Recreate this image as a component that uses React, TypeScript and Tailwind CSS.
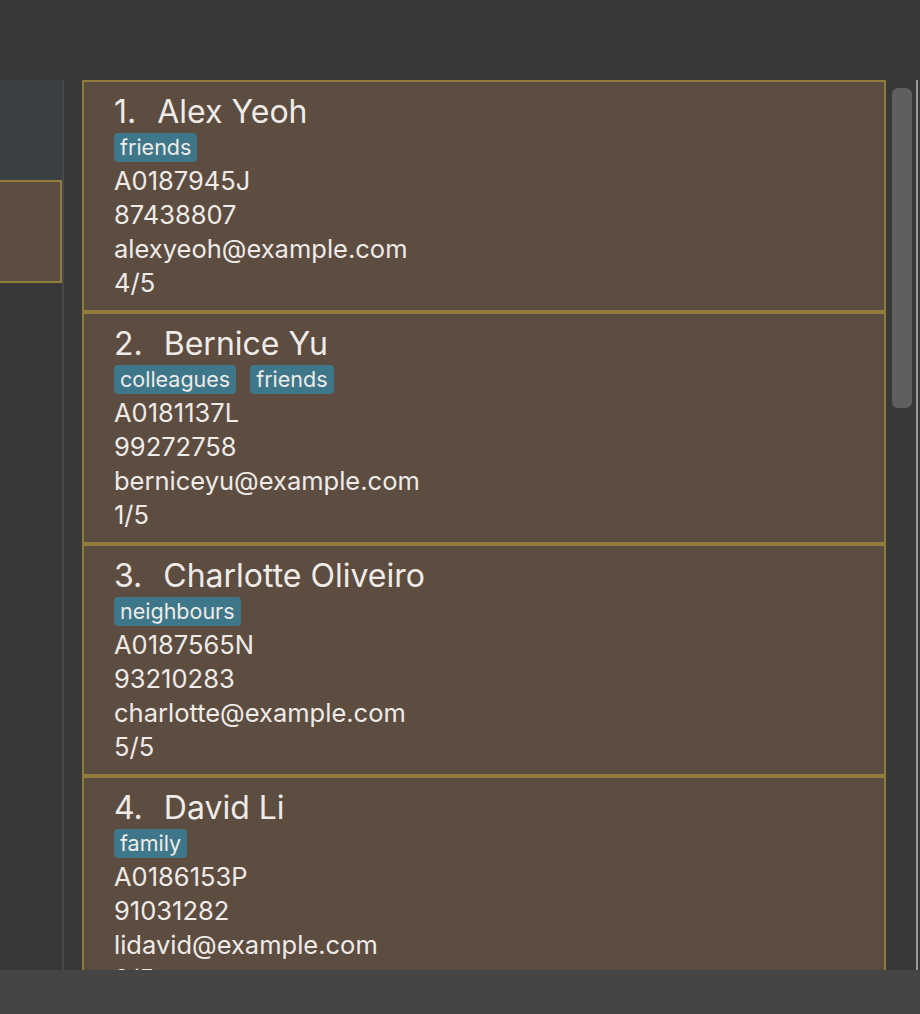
import React from "react";

type Person = { name: string; tags: string[]; id: string; phone: string; email: string; score: string };

const people: Person[] = [
  { name: "Alex Yeoh", tags: ["friends"], id: "A0187945J", phone: "87438807", email: "alexyeoh@example.com", score: "4/5" },
  { name: "Bernice Yu", tags: ["colleagues", "friends"], id: "A0181137L", phone: "99272758", email: "berniceyu@example.com", score: "1/5" },
  { name: "Charlotte Oliveiro", tags: ["neighbours"], id: "A0187565N", phone: "93210283", email: "charlotte@example.com", score: "5/5" },
  { name: "David Li", tags: ["family"], id: "A0186153P", phone: "91031282", email: "lidavid@example.com", score: "2/5" },
];

function Card({ p, i }: { p: Person; i: number }) {
  return (
    <div className="h-[232px] shrink-0 border-2 border-[#917c3c] bg-[#5d4d41] pl-[30px] pt-[13px] text-[#efebe8]">
      <div className="flex h-[34px] items-center gap-[21px] text-[32px] leading-[34px]">
        <span>{i + 1}.</span>
        <span>{p.name}</span>
      </div>
      <div className="mt-[4px] flex h-[29px] gap-[14px]">
        {p.tags.map((t) => (
          <span key={t} className="flex h-[29px] items-center rounded-[4px] bg-[#3e7789] px-[6px] text-[21.5px] leading-[29px]">
            {t}
          </span>
        ))}
      </div>
      <div className="mt-[2px] text-[25.5px] leading-[34px]">
        <div>{p.id}</div>
        <div>{p.phone}</div>
        <div>{p.email}</div>
        <div>{p.score}</div>
      </div>
    </div>
  );
}

export default function App() {
  return (
    <div
      className="flex h-[1014px] w-[920px] flex-col overflow-hidden bg-[#383838]"
      style={{ fontFamily: "Inter, 'Noto Sans', sans-serif" }}
    >
      <div className="h-[80px] shrink-0 bg-[#383838]" />
      <div className="flex min-h-0 flex-1">
        <div className="flex w-[62px] shrink-0 flex-col">
          <div className="h-[100px] bg-[#3c3f41]" />
          <div className="h-[103px] border-y-2 border-r-2 border-[#917c3c] bg-[#5d4d41]" />
          <div className="flex-1 bg-[#383838]" />
        </div>
        <div className="w-[2px] shrink-0 bg-[#484848]" />
        <div className="w-[18px] shrink-0" />
        <div className="flex min-h-0 w-[804px] shrink-0 flex-col overflow-hidden">
          {people.map((p, i) => (
            <Card key={p.name} p={p} i={i} />
          ))}
        </div>
        <div className="w-[6px] shrink-0" />
        <div className="w-[20px] shrink-0 pt-[8px]">
          <div className="h-[320px] rounded-[6px] bg-[#5f5f5f]" />
        </div>
        <div className="w-[4px] shrink-0" />
        <div className="w-[2px] shrink-0 bg-[#9a9a9a]" />
        <div className="w-[2px] shrink-0" />
      </div>
      <div className="h-[44px] shrink-0 bg-[#454545]" />
    </div>
  );
}
